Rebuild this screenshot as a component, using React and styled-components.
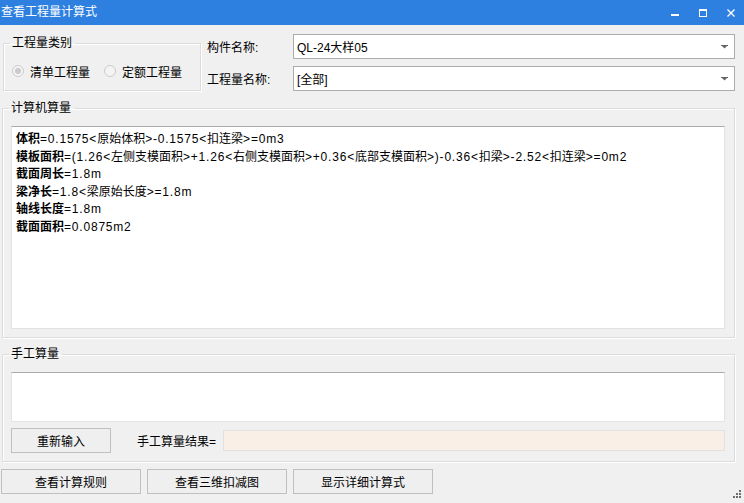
import React from 'react';
import styled, { createGlobalStyle } from 'styled-components';

const GlobalStyle = createGlobalStyle`
  html, body {
    margin: 0;
    padding: 0;
    background: #f0f0f0;
  }
  body {
    font-family: "Liberation Sans", "Noto Sans CJK SC", sans-serif;
    font-size: 12px;
    color: #000;
  }
`;

const Window = styled.div`
  position: relative;
  width: 744px;
  height: 503px;
  display: flex;
  flex-direction: column;
  background: #f0f0f0;
  overflow: hidden;
`;

const TitleBar = styled.div`
  height: 25px;
  flex-shrink: 0;
  display: flex;
  align-items: center;
  background: #2d7fe0;
  color: #fff;
`;

const Title = styled.div`
  flex: 1;
  padding-left: 1px;
  line-height: 25px;
`;

const Controls = styled.div`
  display: flex;
  margin-right: -1px;
`;

const ControlButton = styled.div`
  width: 28px;
  height: 25px;
  display: flex;
  align-items: center;
  justify-content: center;
`;

const Content = styled.div`
  flex: 1;
  display: flex;
  flex-direction: column;
  padding: 9px 9px 0 0;
`;

const TopRow = styled.div`
  display: flex;
  margin-left: 3px;
`;

const GroupBox = styled.fieldset`
  margin: ${p => p.$margin || '0'};
  padding: ${p => p.$padding || '11px 9px 8px 8px'};
  border: 1px solid #dcdcdc;
  box-shadow: 1px 1px 0 #fff, inset 1px 1px 0 #fff;
  min-width: 0;
  width: ${p => (p.$width ? `${p.$width}px` : 'auto')};
  flex-shrink: 0;
  box-sizing: border-box;
`;

const Legend = styled.legend`
  margin-left: -2px;
  padding: 0 3px 0 2px;
  height: 14px;
  line-height: 14px;
`;

const RadioRow = styled.div`
  display: flex;
  align-items: center;
  height: 14px;
`;

const RadioItem = styled.label`
  display: flex;
  align-items: center;
  gap: 6px;
  margin-right: ${p => p.$gap || 0}px;
`;

const RadioCircle = styled.span`
  width: 12px;
  height: 12px;
  box-sizing: border-box;
  border-radius: 50%;
  border: 1px solid #cbcbcb;
  background: #f4f4f4;
  display: flex;
  align-items: center;
  justify-content: center;

  &::after {
    content: '';
    width: 6px;
    height: 6px;
    border-radius: 50%;
    background: ${p => (p.$checked ? '#cacaca' : 'transparent')};
  }
`;

const FieldColumn = styled.div`
  flex: 1;
  display: flex;
  flex-direction: column;
  gap: 7px;
  margin-left: 6px;
`;

const FieldRow = styled.div`
  display: flex;
  align-items: center;
`;

const FieldLabel = styled.span`
  width: 86px;
  flex-shrink: 0;
`;

const Combo = styled.div`
  flex: 1;
  height: 25px;
  box-sizing: border-box;
  border: 1px solid #acacac;
  background: #fff;
  display: flex;
  align-items: center;
  padding: 0 6px 0 3px;
`;

const ComboText = styled.span`
  flex: 1;
`;

const TextPanel = styled.div`
  height: ${p => p.$height}px;
  box-sizing: border-box;
  background: #fff;
  border: 1px solid #e3e3e3;
  border-top-color: #ababab;
  padding: 3px 4px;
`;

const FormulaLine = styled.div`
  height: 17.6px;
  line-height: 18px;
  white-space: nowrap;

  b {
    font-weight: 700;
  }
`;

const Ascii = styled.span`
  letter-spacing: 0.8px;
`;

const ManualRow = styled.div`
  display: flex;
  align-items: center;
  margin-top: 6px;
`;

const Button = styled.button`
  width: ${p => p.$width}px;
  height: 25px;
  box-sizing: border-box;
  border: 1px solid #bfbfbf;
  background: #efefef;
  font: inherit;
  color: #000;
  padding: 0;
`;

const ResultLabel = styled.span`
  margin-left: 26px;
  width: 80px;
`;

const ResultInput = styled.div`
  flex: 1;
  height: 21px;
  margin-left: 6px;
  box-sizing: border-box;
  border: 1px solid #e0e0e0;
  background: #f9efe6;
`;

const ButtonBar = styled.div`
  display: flex;
  gap: 6px;
  margin: 7px 0 0 1px;
`;

const Grip = styled.svg`
  position: absolute;
  right: 2px;
  bottom: 3px;
`;

const ComboArrow = () => (
  <svg width="7" height="4" viewBox="0 0 7 4">
    <rect x="0" y="0" width="7" height="1" fill="#666" />
    <path d="M1 1 H6 L3.5 3.5 Z" fill="#666" />
  </svg>
);

const formulas = [
  ['体积', '=0.1575<原始体积>-0.1575<扣连梁>=0m3'],
  ['模板面积', '=(1.26<左侧支模面积>+1.26<右侧支模面积>+0.36<底部支模面积>)-0.36<扣梁>-2.52<扣连梁>=0m2'],
  ['截面周长', '=1.8m'],
  ['梁净长', '=1.8<梁原始长度>=1.8m'],
  ['轴线长度', '=1.8m'],
  ['截面面积', '=0.0875m2'],
];

// the ascii parts of the formulas run a little wider than the CJK ones
const renderFormula = text =>
  text.split(/([\u4e00-\u9fff]+)/).map((part, i) =>
    /[\u4e00-\u9fff]/.test(part) ? part : <Ascii key={i}>{part}</Ascii>
  );

export default function App() {
  return (
    <Window>
      <GlobalStyle />
      <TitleBar>
        <Title>查看工程量计算式</Title>
        <Controls>
          <ControlButton>
            <svg width="8" height="8" viewBox="0 0 8 8">
              <rect x="0" y="5" width="8" height="2" fill="#fff" />
            </svg>
          </ControlButton>
          <ControlButton>
            <svg width="8" height="8" viewBox="0 0 8 8">
              <rect x="0.5" y="0.5" width="7" height="7" fill="none" stroke="#fff" />
              <rect x="0" y="0" width="8" height="2" fill="#fff" />
            </svg>
          </ControlButton>
          <ControlButton>
            <svg width="8" height="8" viewBox="0 0 8 8">
              <path d="M0.5 0.5 L7.5 7.5 M7.5 0.5 L0.5 7.5" stroke="#fff" strokeWidth="1.4" />
            </svg>
          </ControlButton>
        </Controls>
      </TitleBar>

      <Content>
        <TopRow>
          <GroupBox $width={198} $margin="2px 0 0 0" $padding="14px 8px 12px 8px">
            <Legend>工程量类别</Legend>
            <RadioRow>
              <RadioItem $gap={14}>
                <RadioCircle $checked />
                清单工程量
              </RadioItem>
              <RadioItem>
                <RadioCircle />
                定额工程量
              </RadioItem>
            </RadioRow>
          </GroupBox>
          <FieldColumn>
            <FieldRow>
              <FieldLabel>构件名称:</FieldLabel>
              <Combo>
                <ComboText>QL-24大样05</ComboText>
                <ComboArrow />
              </Combo>
            </FieldRow>
            <FieldRow>
              <FieldLabel>工程量名称:</FieldLabel>
              <Combo>
                <ComboText>[全部]</ComboText>
                <ComboArrow />
              </Combo>
            </FieldRow>
          </FieldColumn>
        </TopRow>

        <GroupBox $margin="10px 0 0 2px">
          <Legend>计算机算量</Legend>
          <TextPanel $height={203}>
            {formulas.map(([label, rest]) => (
              <FormulaLine key={label}>
                <b>{label}</b>
                {renderFormula(rest)}
              </FormulaLine>
            ))}
          </TextPanel>
        </GroupBox>

        <GroupBox $margin="9px 0 0 2px">
          <Legend>手工算量</Legend>
          <TextPanel $height={50} />
          <ManualRow>
            <Button $width={100}>重新输入</Button>
            <ResultLabel>手工算量结果=</ResultLabel>
            <ResultInput />
          </ManualRow>
        </GroupBox>

        <ButtonBar>
          <Button $width={140}>查看计算规则</Button>
          <Button $width={140}>查看三维扣减图</Button>
          <Button $width={140}>显示详细计算式</Button>
        </ButtonBar>
      </Content>

      <Grip width="10" height="10" viewBox="0 0 10 10">
        <rect x="7" y="0" width="2" height="2" fill="#6d6d6d" />
        <rect x="4" y="3" width="2" height="2" fill="#6d6d6d" />
        <rect x="7" y="3" width="2" height="2" fill="#6d6d6d" />
        <rect x="1" y="6" width="2" height="2" fill="#6d6d6d" />
        <rect x="4" y="6" width="2" height="2" fill="#6d6d6d" />
        <rect x="7" y="6" width="2" height="2" fill="#6d6d6d" />
      </Grip>
    </Window>
  );
}
